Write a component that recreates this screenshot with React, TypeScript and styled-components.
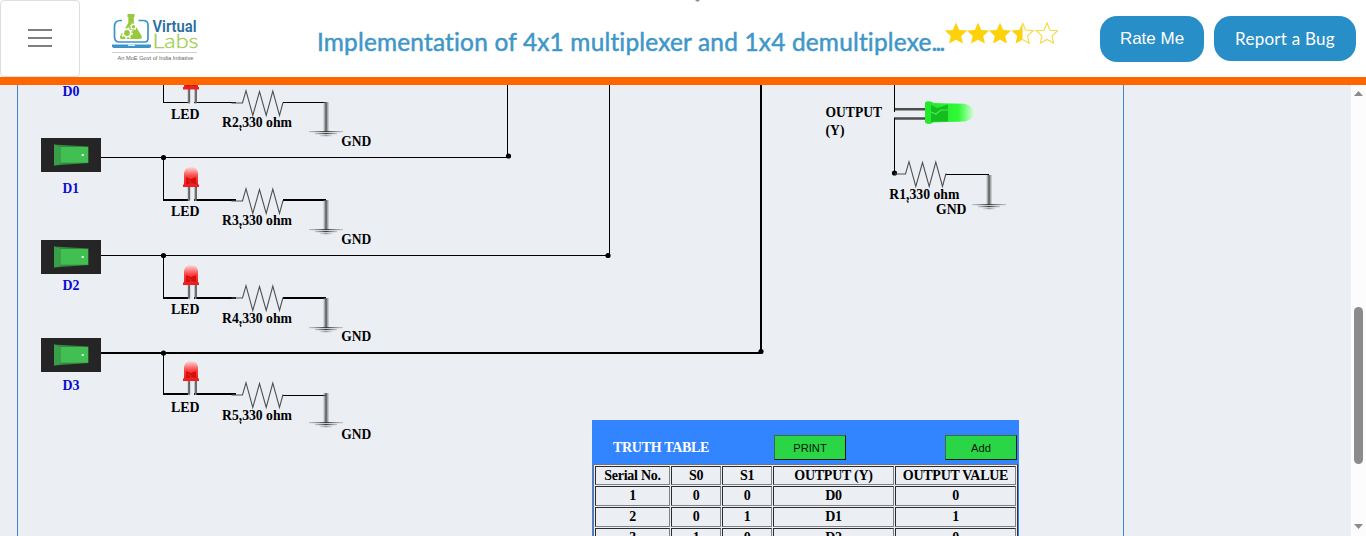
import React from "react";
import styled, { createGlobalStyle } from "styled-components";

const GlobalStyle = createGlobalStyle`
  * { box-sizing: border-box; }
  body { margin: 0; background: #ebeef3; overflow: hidden; }
`;

const Page = styled.div`
  position: relative;
  display: flex;
  flex-direction: column;
  width: 1366px;
  height: 536px;
  overflow: hidden;
  background: #ebeef3;
`;

const Header = styled.header`
  display: flex;
  align-items: flex-start;
  flex: none;
  height: 85px;
  background: #fff;
  border-bottom: 8px solid #ff6600;
`;

/* Tip of a chevron that peeks in over the top edge of the header. */
const TopNotch = styled.i`
  position: absolute;
  top: 0;
  left: 695px;
  width: 5px;
  height: 2px;
  background: #8c8c96;
  clip-path: polygon(0 0, 100% 0, 50% 100%);
`;

const MenuButton = styled.button`
  display: flex;
  flex-direction: column;
  align-items: center;
  justify-content: center;
  gap: 6px;
  width: 80px;
  height: 77px;
  padding: 0 0 1px;
  background: #fff;
  border: 1px solid #dedede;
  border-radius: 4px;
`;

const MenuBar = styled.span`
  width: 24px;
  height: 2px;
  background: #808080;
`;

const LogoLink = styled.a`
  display: block;
  width: 100px;
  height: 60px;
  margin: 8px 0 0 25px;
`;

const Title = styled.h1`
  width: 628px;
  margin: 26px 0 0 112px;
  font: 400 24.4px/32px Lato, sans-serif;
  letter-spacing: 0.2px;
  color: #3e97c8;
  -webkit-text-stroke: 0.5px #3e97c8;
  white-space: nowrap;
`;

const Ellipsis = styled.span`
  letter-spacing: -1.8px;
`;

const Rating = styled.div`
  width: 114px;
  height: 26px;
  margin: 21px 0 0 -1px;
`;

const Actions = styled.div`
  display: flex;
  align-items: flex-start;
  gap: 10px;
  margin: 16px 0 0 42px;
`;

const ActionButton = styled.button<{ $w: number; $h: number; $face: string; $spacing?: string }>`
  width: ${(p) => p.$w}px;
  height: ${(p) => p.$h}px;
  padding: 0;
  border: 0;
  border-radius: 17px;
  background: #288ec8;
  color: #fff;
  font: 17px/20px ${(p) => p.$face}, sans-serif;
  letter-spacing: ${(p) => p.$spacing ?? "0"};
  white-space: nowrap;
`;

const Body = styled.div`
  display: flex;
  flex: 1;
  min-height: 0;
`;

const Bench = styled.main`
  display: grid;
  grid-template: 451px / 1105px;
  width: 1107px;
  margin: 0 227px 0 17px;
  border-left: 1px solid #3f86cc;
  border-right: 1px solid #3f86cc;
  overflow: hidden;
`;

const Circuit = styled.svg`
  grid-area: 1 / 1;
  display: block;
  font: bold 14.2px "Liberation Serif", serif;
`;

const TruthPanel = styled.section`
  grid-area: 1 / 1;
  z-index: 1;
  width: 427px;
  margin: 335px 0 0 574px;
  background: #3385ff;
  overflow: hidden;
`;

const PanelBar = styled.div`
  display: flex;
  align-items: flex-start;
  height: 44px;
  padding: 15px 2px 0 21px;
`;

const PanelTitle = styled.h2`
  width: 161px;
  margin: 4px 0 0;
  color: #fff;
  font: bold 14px/18px "Liberation Serif", serif;
  letter-spacing: -0.3px;
  white-space: nowrap;
`;

const PanelButton = styled.button`
  width: 72px;
  height: 25px;
  padding: 0;
  border: 1px solid;
  border-color: #3a6a48 #101c10 #101c10 #3a6a48;
  background: #2ad546;
  color: #061806;
  font: 11.2px/14px "Liberation Sans", sans-serif;

  & + & { margin-left: 99px; }
`;

const Grid = styled.div`
  display: grid;
  grid-template-columns: 75px 50px 50px 121px 121px;
  grid-template-rows: 19px repeat(4, 20px);
  gap: 1px;
  width: 425px;
  margin-left: 1px;
  padding: 1px;
  border: 1px solid #737373;
  border-right-color: #333;
  background: #ebeef3;
`;

const Cell = styled.div`
  padding-top: 1px;
  border: 1px solid;
  border-color: #2c2c2c #808080 #808080 #2c2c2c;
  color: #000;
  font: bold 14px/16px "Liberation Serif", serif;
  letter-spacing: -0.27px;
  text-align: center;
  white-space: nowrap;
`;

const ScrollTrack = styled.div`
  display: flex;
  flex-direction: column;
  align-items: center;
  width: 15px;
  background: #fcfcfc;
  padding: 6px 0 0;
`;

const ScrollArrow = styled.i<{ $down?: boolean }>`
  width: 9px;
  height: 5px;
  background: #8b8b8b;
  clip-path: ${(p) => (p.$down ? "polygon(0 0, 100% 0, 50% 100%)" : "polygon(50% 0, 100% 100%, 0 100%)")};
`;

const ScrollThumb = styled.div`
  width: 9px;
  height: 157px;
  margin: 211px 0 60px;
  border-radius: 5px;
  background: #8b8b8b;
`;

const Logo = () => (
  <svg width="100" height="60" viewBox="0 0 100 60">
    <path
      d="M17 12.500h-1.500q-6 0-6 6v10q0 5 4 5.500h26.500q3 0 3-4V17q0-4.500-5-4.500h-4.500"
      fill="none" stroke="#3b93c8" strokeWidth="1.700"
    />
    <path d="M7 36.500h39v1.500q0 2-3 2H10q-3 0-3-2z" fill="#3b93c8" />
    <rect x="23" y="36.500" width="7" height="1.500" fill="#d7ebf5" />
    <path d="M22.500 6h7v3h-.700v6l7.600 12.500q1.500 3.500-2 3.500h-17q-3.500 0-2-3.500L23.300 15V9h-.8z" fill="#97c93d" />
    <g fill="none" stroke="#fff">
      <circle cx="22" cy="25" r="3.800" strokeWidth="1.800" />
      <circle cx="22" cy="25" r="5.200" strokeWidth="1.400" strokeDasharray="1.800 2.280" />
      <circle cx="28.500" cy="18.700" r="2.300" strokeWidth="1.200" />
      <circle cx="28.500" cy="18.700" r="3.300" strokeWidth="0.900" strokeDasharray="1.100 1.490" />
    </g>
    <text x="47.500" y="23.500" textLength="44" lengthAdjust="spacingAndGlyphs" fontFamily="Roboto" fontWeight="600" fontSize="16" fill="#286ea0">Virtual</text>
    <text x="47.500" y="40" textLength="46" lengthAdjust="spacingAndGlyphs" fontFamily="Lato" fontWeight="300" fontSize="19" fill="#a0cd4d" stroke="#a0cd4d" strokeWidth=".3">Labs</text>
    <rect x="7" y="44" width="85" height="1" fill="#cfcfcf" />
    <text x="12.500" y="52" textLength="76" lengthAdjust="spacingAndGlyphs" fontFamily="Liberation Sans" fontSize="5.600" fill="#666">An MoE Govt of India Initiative</text>
  </svg>
);

const STAR = "M0-11.500 3.200-4 11.200-3.400 5.200 1.900 7 9.600 0 5.700-7 9.600-5.200 1.900-11.200-3.400-3.200-4z";

const Stars = () => (
  <svg width="114" height="26" viewBox="943 21 114 26">
    <g fill="#fdd20a">
      {[955, 977, 999].map((x) => <path key={x} d={STAR} transform={`translate(${x} 34)`} />)}
      <path d="M0-11.500V5.700L-7 9.600-5.200 1.900-11.200-3.400-3.200-4z" transform="translate(1021.500 34)" />
    </g>
    <g fill="none" stroke="#f5d93c" strokeWidth="1.100">
      <path d="M0-11.200 3-4 10.600-3.300 5 1.900 6.700 9.200 0 5.400" transform="translate(1021.500 34)" />
      <path d={STAR} transform="translate(1046 34) scale(.96)" />
    </g>
  </svg>
);

type At = { x: number; y: number };

const Label = ({ x, y, w, blue, children }: At & { w: number; blue?: boolean; children: string }) => (
  <text x={x} y={y} textLength={w} lengthAdjust="spacingAndGlyphs" fill={blue ? "#0a0ad2" : "#000"}>{children}</text>
);

const Wire = ({ x, y, w = 1, h = 1 }: At & { w?: number; h?: number }) => (
  <rect x={x} y={y} width={w} height={h} fill="#000" />
);

const Node = ({ x, y }: At) => <circle cx={x} cy={y} r="2.600" fill="#000" />;

const Resistor = ({ x, y, lead = 11 }: At & { lead?: number }) => (
  <path
    d={`M${-lead} 0H0L3.500-12.300 10.300 12.500 17-11.500 23.700 12.500 30.300-12 37 12.500 40.500-.500`}
    transform={`translate(${x} ${y})`} fill="none" stroke="#505050" strokeWidth="1.100"
  />
);

const ResistorLabel = ({ x, y, n }: At & { n: number }) => (
  <>
    <Label x={x} y={y} w={70}>{`R${n},330 ohm`}</Label>
    <rect x={x + 18} y={y + 2} width="1.300" height="1.700" />
  </>
);

/* Origin is the point where the ground post meets the widest plate. */
const Ground = ({ x, y }: At) => (
  <g transform={`translate(${x} ${y})`}>
    <rect x="-3" y="-28" width="6" height="29" fill="url(#post)" />
    <rect x="-17" y="1" width="34" height="1.200" fill="url(#plate)" />
    <rect x="-11" y="3" width="22" height="1.200" fill="url(#plate)" />
    <rect x="-6" y="5.200" width="12" height="1" fill="url(#plate)" opacity=".6" />
  </g>
);

const RedLed = ({ y }: { y: number }) => (
  <g transform={`translate(191 ${y})`}>
    <path d="M-2.200 19v15M4.600 19v15" stroke="#757575" strokeWidth="2" />
    <path d="M-1.300 19v14M5.400 19v14" stroke="#484848" strokeWidth=".7" />
    <path d="M-7 18V6Q-6 0 0 0T7 6v12z" fill="url(#red)" />
    <path d="M-5 10l5 2 5-2v7H-5z" fill="#d60e0e" />
    <path d="M-8 17.500H8v2.500H-8z" fill="#ed2020" />
    <path d="M-3 13l3 2-1 2h4" fill="none" stroke="#ef3838" strokeWidth=".7" />
  </g>
);

const Switch = ({ y }: { y: number }) => (
  <g transform={`translate(41 ${y})`}>
    <rect width="60" height="34" fill="#252525" />
    <path d="M13 6.500 47.500 8.500V25L13 27.500z" fill="#35863f" />
    <path d="M13 6.500l6 2V26l-6 1.500z" fill="#39a049" />
    <path d="M19.500 9H47v15.700H19.500z" fill="#42bf52" />
    <rect x="40.500" y="16" width="2.500" height="2" rx=".8" fill="#d9f5d8" />
  </g>
);

const branches = [
  { n: 2, label: 119, rLabel: 127, gLabel: 146, led: 69.5, left: 102, lh: 1, right: 102, rh: 1, res: 103, gnd: 130, top: 60 },
  { n: 3, label: 216, rLabel: 225, gLabel: 244, led: 167, left: 199, lh: 2, right: 199, rh: 2, res: 201, gnd: 228, top: 157 },
  { n: 4, label: 314, rLabel: 323, gLabel: 341, led: 265, left: 297, lh: 2, right: 297, rh: 2, res: 298, gnd: 326, top: 255 },
  { n: 5, label: 412, rLabel: 420, gLabel: 439, led: 361, left: 393, lh: 2, right: 395, rh: 1, res: 395, gnd: 421, top: 353 },
];

const CircuitDiagram = () => (
  <Circuit width="1105" height="451" viewBox="18 85 1105 451">
    <defs>
      <linearGradient id="post">
        <stop offset="0" stopColor="#999" stopOpacity=".1" />
        <stop offset=".5" stopColor="#505050" />
        <stop offset="1" stopColor="#999" stopOpacity=".25" />
      </linearGradient>
      <linearGradient id="plate">
        <stop offset="0" stopColor="#999" stopOpacity=".5" />
        <stop offset=".5" stopColor="#333" />
        <stop offset="1" stopColor="#999" stopOpacity=".5" />
      </linearGradient>
      <linearGradient id="red" x2="0" y2="1">
        <stop offset="0" stopColor="#fbdcdc" />
        <stop offset=".5" stopColor="#fb4545" />
        <stop offset="1" stopColor="#f01b1b" />
      </linearGradient>
      <linearGradient id="green">
        <stop offset="0" stopColor="#20e62a" />
        <stop offset=".65" stopColor="#30fa38" />
        <stop offset="1" stopColor="#d9fbdc" />
      </linearGradient>
    </defs>

    <Wire x={101} y={157} w={407} />
    <Wire x={101} y={255} w={508} />
    <Wire x={101} y={352} w={661} h={2} />
    <Wire x={507} y={85} h={72} />
    <Wire x={609} y={85} h={171} />
    <Wire x={760} y={85} w={2} h={268} />
    <Node x={163.5} y={157.5} />
    <Node x={163.5} y={255.5} />
    <Node x={163.5} y={353} />
    <Node x={508.5} y={156} />
    <Node x={608} y={255.5} />
    <Node x={761} y={351.5} />

    {branches.map((b) => (
      <g key={b.n}>
        <Wire x={163} y={b.top} h={b.left - b.top + b.lh} />
        <Wire x={163} y={b.left} w={25} h={b.lh} />
        <Wire x={194} y={b.left} w={42} h={b.lh} />
        <Wire x={283} y={b.right} w={43} h={b.rh} />
        <RedLed y={b.led} />
        <Resistor x={242.5} y={b.res} />
        <Ground x={326} y={b.gnd} />
        <Label x={171} y={b.label} w={28.5}>LED</Label>
        <ResistorLabel x={222} y={b.rLabel} n={b.n} />
        <Label x={341.300} y={b.gLabel} w={30}>GND</Label>
      </g>
    ))}

    <Switch y={138} />
    <Switch y={240} />
    <Switch y={338} />
    <Label x={62.500} y={96} w={17} blue>D0</Label>
    <Label x={62.500} y={193} w={16.500} blue>D1</Label>
    <Label x={62.500} y={290} w={17} blue>D2</Label>
    <Label x={62.500} y={390} w={17} blue>D3</Label>

    <path d="M894 109.200h33M894 118.500h33" stroke="#4c4c4c" strokeWidth="2.600" />
    <Wire x={894} y={85} h={27} />
    <Wire x={894} y={118} h={56} />
    <path d="M930 103l35 .8q9 3 9 9t-9 8.700L930 122.500z" fill="url(#green)" />
    <path d="M925 102.500q3-2.500 8 0v20q-4 3-8 0z" fill="#25e92d" />
    <path d="M931 105l6 3 11-3.500v17h-13l-4 .5z" fill="#16bd20" />
    <path d="M931 112l5 2 5-4h7" fill="none" stroke="#44ef4b" strokeWidth="1.200" />
    <Label x={825.500} y={117} w={56.500}>OUTPUT</Label>
    <Label x={825.500} y={135} w={19}>(Y)</Label>
    <Node x={894.5} y={173} />
    <Resistor x={905.5} y={174} />
    <Wire x={946} y={174} w={43} />
    <Ground x={989} y={203} />
    <ResistorLabel x={889.300} y={199} n={1} />
    <Label x={936} y={214} w={30.500}>GND</Label>
  </Circuit>
);

const rows = [
  ["Serial No.", "S0", "S1", "OUTPUT (Y)", "OUTPUT VALUE"],
  ["1", "0", "0", "D0", "0"],
  ["2", "0", "1", "D1", "1"],
  ["3", "1", "0", "D2", "0"],
];

export default function App() {
  return (
    <Page>
      <GlobalStyle />
      <Header>
        <MenuButton aria-label="Menu"><MenuBar /><MenuBar /><MenuBar /></MenuButton>
        <LogoLink><Logo /></LogoLink>
        <Title>Implementation of 4x1 multiplexer and 1x4 demultiplexe<Ellipsis>...</Ellipsis></Title>
        <Rating><Stars /></Rating>
        <Actions>
          <ActionButton $w={104} $h={46} $face='"Liberation Sans"'>Rate Me</ActionButton>
          <ActionButton $w={142} $h={45} $face="Lato" $spacing="0.25px">Report a Bug</ActionButton>
        </Actions>
      </Header>
      <TopNotch />
      <Body>
        <Bench>
          <CircuitDiagram />
          <TruthPanel>
            <PanelBar>
              <PanelTitle>TRUTH TABLE</PanelTitle>
              <PanelButton>PRINT</PanelButton>
              <PanelButton>Add</PanelButton>
            </PanelBar>
            <Grid>
              {rows.flatMap((r, i) => r.map((c, j) => <Cell key={`${i}-${j}`}>{c}</Cell>))}
            </Grid>
          </TruthPanel>
        </Bench>
        <ScrollTrack>
          <ScrollArrow />
          <ScrollThumb />
          <ScrollArrow $down />
        </ScrollTrack>
      </Body>
    </Page>
  );
}
